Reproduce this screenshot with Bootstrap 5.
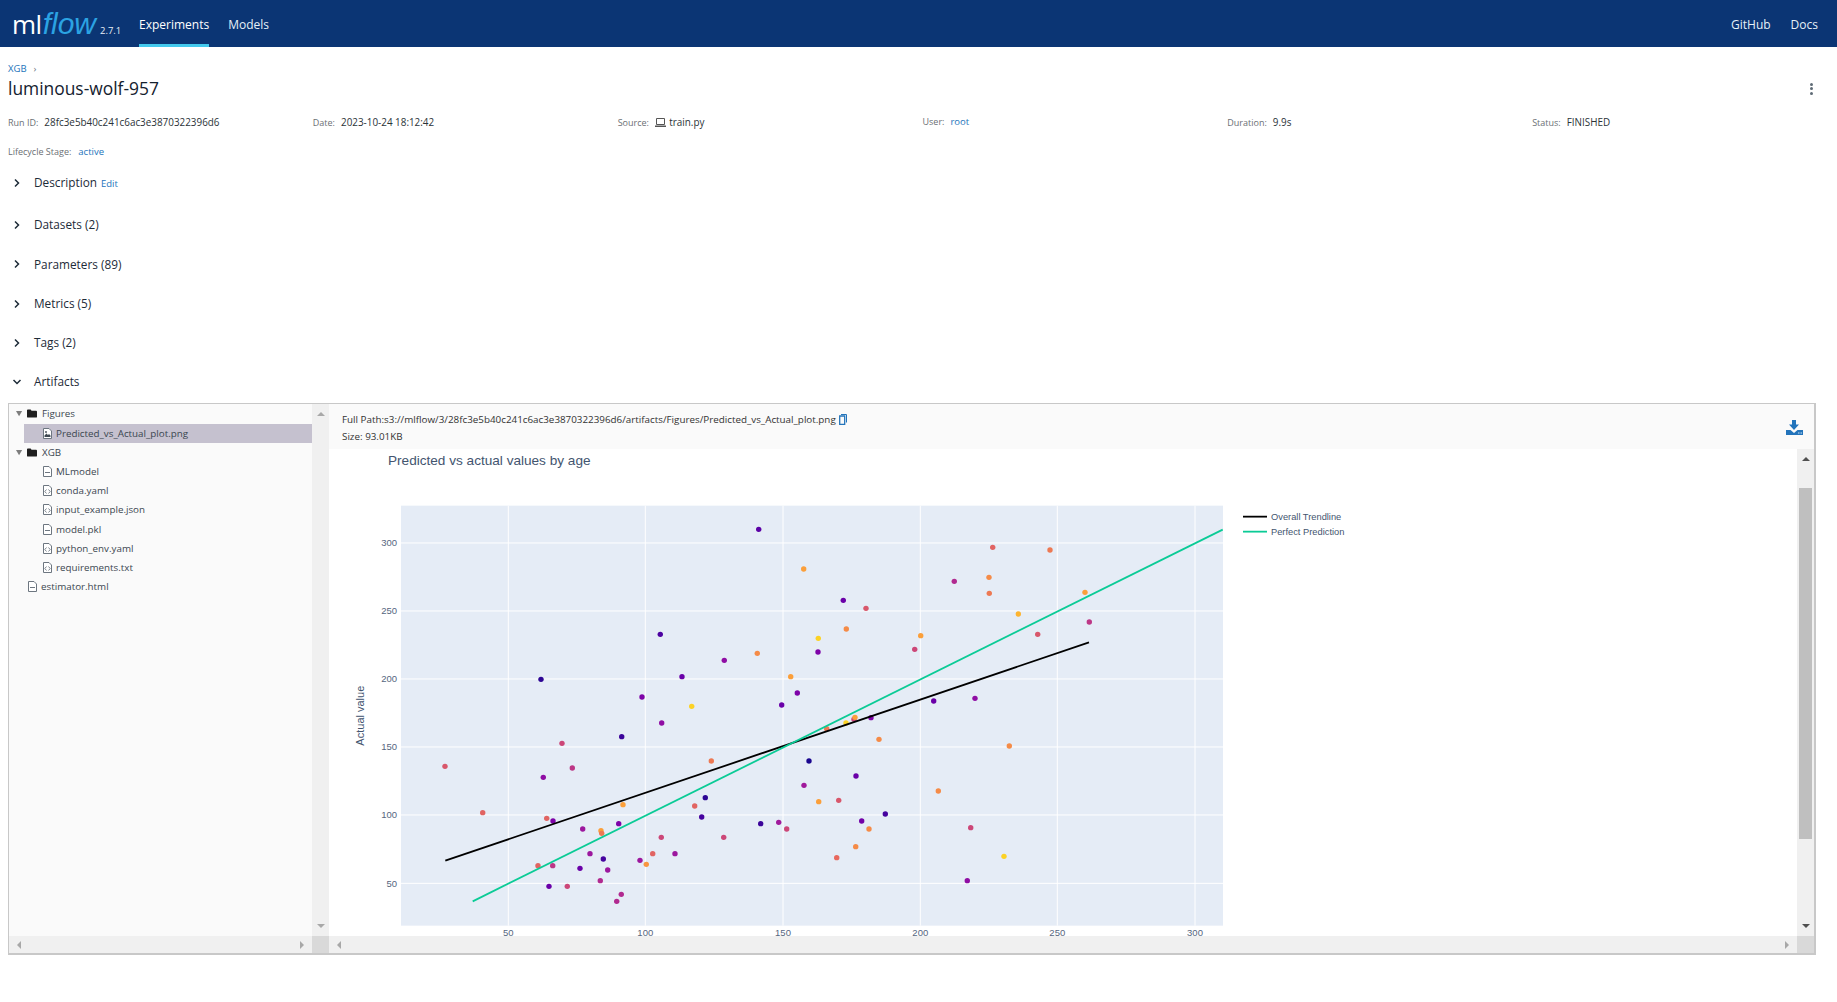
<!DOCTYPE html>
<html lang="en">
<head>
  <meta charset="UTF-8">
  <title>luminous-wolf-957 - MLflow Run</title>
  <link href="https://cdn.jsdelivr.net/npm/bootstrap@5.3.3/dist/css/bootstrap.min.css" rel="stylesheet">
  <style>
    html, body { height: 100%; }
    body {
      background: #fff;
      font-family: "Open Sans", "Liberation Sans", sans-serif;
      font-size: 10px;
      color: #1d2b38;
      overflow: hidden;
    }
    a { text-decoration: none; color: #2374bb; }

    .top-bar { background: #0b3574; height: 47px; padding: 0; }
    .brand-logo { margin-left: 12px; width: 127px; height: 47px; line-height: 47px; white-space: nowrap; }
    .logo-ml { color: #fff; font-size: 26px; font-weight: 500; letter-spacing: -0.5px; }
    .logo-flow { color: #2ba3e3; font-size: 30px; font-style: italic; font-family: "Liberation Sans", sans-serif; margin-left: 1px; }
    .logo-ver { color: #e8eef6; font-size: 9.500px; margin-left: 4px; }
    .top-link { color: #e6f1f8; font-size: 12px; height: 47px; line-height: 50px; display: block; }
    .top-link.is-active { color: #fff; border-bottom: 3px solid #43c9ed; }
    .top-links { gap: 19px; }
    .top-right { gap: 20px; margin-right: 19px; }

    .run-page { padding: 15px 0 0 8px; }
    .crumb { height: 14px; line-height: 14px; font-size: 9.500px; }
    .crumb span { color: #6b7680; margin-left: 7px; }
    .run-name { height: 25px; line-height: 25px; font-size: 17.400px; font-weight: 400; margin: 0; color: #14212e; }
    .run-menu { width: 3px; margin-right: 24px; gap: 1.500px; }
    .run-menu i { display: block; width: 3px; height: 3px; border-radius: 50%; background: #5f6b76; }
    .meta-row { height: 14px; line-height: 14px; margin-top: 14px; font-size: 9px; }
    .meta-row.second { margin-top: 16px; }
    .meta-key { color: #6b6f74; margin-right: 6px; }
    .meta-row.second .meta-key { margin-right: 7px; }
    .meta-val { color: #2b3338; font-size: 9.900px; }
    .meta-row a { font-size: 9.500px; }
    .src-icon { vertical-align: -1px; margin-right: 1px; }

    .sect-head { height: 39.400px; font-size: 11.800px; color: #1d2b38; padding-left: 5px; gap: 13px; }
    .sect-head.first { margin-top: 4px; margin-bottom: 3px; }
    .sect-head.last { height: 37.400px; }
    .sect-head.last svg { margin-left: -1px; margin-right: -1px; }
    .sect-head a { font-size: 9.500px; margin-left: -9px; padding-top: 2px; }

    .art-box { width: 1808px; height: 552px; margin-top: 3px; border: 1px solid #c8c8c8; border-right-width: 2px; border-bottom-width: 2px; }
    .tree-pane { width: 320px; }
    .tree-list { background: #fafafa; font-size: 9.800px; color: #3a4650; }
    .tree-row { height: 19.200px; line-height: 19px; white-space: nowrap; padding-left: 7px; }
    .tree-row svg { flex: none; }
    .tree-row.lvl1 { padding-left: 34px; }
    .tree-row.lvl0 { padding-left: 19px; }
    .tree-row.picked { background: #c5c1cf; margin-left: 15px; padding-left: 19px; }
    .tree-row .lbl { margin-left: 4px; }
    .tree-row .lbl.dir { margin-left: 5px; }

    .bar-v { width: 17px; background: #f0f0f0; }
    .bar-h { height: 17px; background: #f0f0f0; }
    .bar-corner { width: 17px; height: 17px; background: #d9d9d9; }
    .bar-thumb { width: 13px; height: 351px; background: #bfbfbf; margin: 0 2px; position: absolute; top: 39px; left: 0; }
    .arrow-u, .arrow-d { width: 0; height: 0; border-left: 4px solid transparent; border-right: 4px solid transparent; }
    .arrow-l, .arrow-r { width: 0; height: 0; border-top: 4px solid transparent; border-bottom: 4px solid transparent; }
    .arrow-u { border-bottom: 4px solid #a8a8a8; }
    .arrow-d { border-top: 4px solid #a8a8a8; }
    .arrow-l { border-right: 4px solid #a8a8a8; }
    .arrow-r { border-left: 4px solid #a8a8a8; }
    .arrow-u.dark { border-bottom-color: #505050; }
    .arrow-d.dark { border-top-color: #505050; }

    .view-pane { min-width: 0; }
    .view-head { height: 45px; background: #fafafa; padding: 7px 11px 0 13px; font-size: 9.830px; line-height: 17px; color: #333; }
    .dl-icon { margin-top: 9px; }
    .copy-icon { margin-left: 3px; vertical-align: -2px; }
    .plot-row { min-height: 0; }
    .plot-wrap { min-height: 0; background: #fff; }
    #plotCanvas { display: block; width: 100%; height: 100%; overflow: visible; }
  </style>
</head>
<body>

<nav class="navbar top-bar d-flex flex-nowrap align-items-start justify-content-between">
  <div class="d-flex">
    <a class="brand-logo" href="#"><span class="logo-ml">ml</span><span class="logo-flow">flow</span><span class="logo-ver">2.7.1</span></a>
    <div class="d-flex top-links">
      <a class="top-link is-active" href="#">Experiments</a>
      <a class="top-link" href="#">Models</a>
    </div>
  </div>
  <div class="d-flex top-right">
    <a class="top-link" href="#">GitHub</a>
    <a class="top-link" href="#">Docs</a>
  </div>
</nav>

<svg width="0" height="0" class="position-absolute">
  <symbol id="i-right" viewBox="0 0 8 10"><path d="M2 1.500l3.500 3.500-3.500 3.500" fill="none" stroke="#1d2b38" stroke-width="1.500"/></symbol>
  <symbol id="i-down" viewBox="0 0 10 8"><path d="M1.500 2l3.500 3.500 3.500-3.500" fill="none" stroke="#1d2b38" stroke-width="1.500"/></symbol>
  <symbol id="i-tri" viewBox="0 0 8 8"><path d="M0 1h7L3.500 7z" fill="#7d7d7d"/></symbol>
  <symbol id="i-folder" viewBox="0 0 11 9"><path d="M0 1q0-1 1-1h3l1 1.500h5q1 0 1 1V8q0 1-1 1H1Q0 9 0 8z" fill="#1f1f1f"/></symbol>
  <symbol id="i-file" viewBox="0 0 9 11"><path d="M.5.500h5.500l2.500 2.500v7.500h-8z" fill="#fff" stroke="#6d7680"/><path d="M2 6h5v1H2z" fill="#6d7680"/></symbol>
  <symbol id="i-code" viewBox="0 0 9 11"><path d="M.5.500h5.500l2.500 2.500v7.500h-8z" fill="#fff" stroke="#6d7680"/><path d="M3.500 4.500L1.800 6.500l1.700 2M5.500 4.500l1.700 2-1.700 2" fill="none" stroke="#6d7680" stroke-width=".9"/></symbol>
  <symbol id="i-image" viewBox="0 0 9 11"><path d="M.5.500h5.500l2.500 2.500v7.500h-8z" fill="#fff" stroke="#6d7680"/><path d="M1.500 9V7.500L3.500 5.500 5 7l1-1 1.500 1.500V9z" fill="#3f4852"/><circle cx="3" cy="4" r=".9" fill="#3f4852"/></symbol>
</svg>

<main class="run-page">
  <div class="crumb"><a href="#">XGB</a><span>›</span></div>
  <div class="d-flex justify-content-between align-items-center">
    <h1 class="run-name">luminous-wolf-957</h1>
    <div class="run-menu d-flex flex-column"><i></i><i></i><i></i></div>
  </div>

  <div class="row g-0 meta-row">
    <div class="col-2"><span class="meta-key">Run ID:</span><span class="meta-val">28fc3e5b40c241c6ac3e3870322396d6</span></div>
    <div class="col-2"><span class="meta-key">Date:</span><span class="meta-val">2023-10-24 18:12:42</span></div>
    <div class="col-2"><span class="meta-key">Source:</span><svg class="src-icon" width="11" height="9" viewBox="0 0 11 9"><path d="M1.500.500h8v6h-8z" fill="none" stroke="#555"/><path d="M0 7.500h11V9H0z" fill="#555"/></svg> <span class="meta-val">train.py</span></div>
    <div class="col-2"><span class="meta-key">User:</span><a href="#">root</a></div>
    <div class="col-2"><span class="meta-key">Duration:</span><span class="meta-val">9.9s</span></div>
    <div class="col-2"><span class="meta-key">Status:</span><span class="meta-val">FINISHED</span></div>
  </div>
  <div class="meta-row second"><span class="meta-key">Lifecycle Stage:</span><a href="#">active</a></div>

  <div class="sect-head first d-flex align-items-center"><svg width="8" height="10"><use href="#i-right"/></svg><span>Description</span><a href="#">Edit</a></div>
  <div class="sect-head d-flex align-items-center"><svg width="8" height="10"><use href="#i-right"/></svg><span>Datasets (2)</span></div>
  <div class="sect-head d-flex align-items-center"><svg width="8" height="10"><use href="#i-right"/></svg><span>Parameters (89)</span></div>
  <div class="sect-head d-flex align-items-center"><svg width="8" height="10"><use href="#i-right"/></svg><span>Metrics (5)</span></div>
  <div class="sect-head d-flex align-items-center"><svg width="8" height="10"><use href="#i-right"/></svg><span>Tags (2)</span></div>
  <div class="sect-head last d-flex align-items-center"><svg width="10" height="8"><use href="#i-down"/></svg><span>Artifacts</span></div>

  <div class="art-box d-flex">
    <div class="tree-pane d-flex flex-column flex-shrink-0">
      <div class="d-flex flex-grow-1">
        <div class="tree-list flex-grow-1">
          <div class="tree-row d-flex align-items-center"><svg width="7" height="7" class="me-1"><use href="#i-tri"/></svg><svg width="10" height="9"><use href="#i-folder"/></svg><span class="lbl dir">Figures</span></div>
          <div class="tree-row picked d-flex align-items-center"><svg width="9" height="11"><use href="#i-image"/></svg><span class="lbl">Predicted_vs_Actual_plot.png</span></div>
          <div class="tree-row d-flex align-items-center"><svg width="7" height="7" class="me-1"><use href="#i-tri"/></svg><svg width="10" height="9"><use href="#i-folder"/></svg><span class="lbl dir">XGB</span></div>
          <div class="tree-row lvl1 d-flex align-items-center"><svg width="9" height="11"><use href="#i-file"/></svg><span class="lbl">MLmodel</span></div>
          <div class="tree-row lvl1 d-flex align-items-center"><svg width="9" height="11"><use href="#i-code"/></svg><span class="lbl">conda.yaml</span></div>
          <div class="tree-row lvl1 d-flex align-items-center"><svg width="9" height="11"><use href="#i-code"/></svg><span class="lbl">input_example.json</span></div>
          <div class="tree-row lvl1 d-flex align-items-center"><svg width="9" height="11"><use href="#i-file"/></svg><span class="lbl">model.pkl</span></div>
          <div class="tree-row lvl1 d-flex align-items-center"><svg width="9" height="11"><use href="#i-code"/></svg><span class="lbl">python_env.yaml</span></div>
          <div class="tree-row lvl1 d-flex align-items-center"><svg width="9" height="11"><use href="#i-code"/></svg><span class="lbl">requirements.txt</span></div>
          <div class="tree-row lvl0 d-flex align-items-center"><svg width="9" height="11"><use href="#i-file"/></svg><span class="lbl">estimator.html</span></div>
        </div>
        <div class="bar-v d-flex flex-column justify-content-between align-items-center py-2">
          <div class="arrow-u"></div>
          <div class="arrow-d"></div>
        </div>
      </div>
      <div class="d-flex">
        <div class="bar-h flex-grow-1 d-flex justify-content-between align-items-center px-2"><div class="arrow-l"></div><div class="arrow-r"></div></div>
        <div class="bar-corner"></div>
      </div>
    </div>

    <div class="view-pane flex-grow-1 d-flex flex-column">
      <div class="view-head d-flex justify-content-between">
        <div>
          <div>Full Path:s3://mlflow/3/28fc3e5b40c241c6ac3e3870322396d6/artifacts/Figures/Predicted_vs_Actual_plot.png<svg class="copy-icon" width="8" height="11" viewBox="0 0 8 11"><path d="M2 .500h5.500v8" fill="none" stroke="#2374bb"/><path d="M.700 2h5v8.500h-5z" fill="none" stroke="#2374bb" stroke-width="1.300"/></svg></div>
          <div>Size: 93.01KB</div>
        </div>
        <svg class="dl-icon" width="17" height="15" viewBox="0 0 17 15"><path d="M6 0h4v4.500h3L8 10 3 4.500h3z" fill="#2374bb"/><path d="M0 10h4.500L8 13l3.500-3H17v5H0z" fill="#2374bb"/><path d="M12 12.500h1.500v1H12zM14.500 12.500H16v1h-1.500z" fill="#cfe2f3"/></svg>
      </div>
      <div class="plot-row d-flex flex-grow-1">
        <div class="plot-wrap flex-grow-1"><svg id="plotCanvas" xmlns="http://www.w3.org/2000/svg"></svg></div>
        <div class="bar-v d-flex flex-column justify-content-between align-items-center py-2 position-relative">
          <div class="arrow-u dark"></div>
          <div class="bar-thumb"></div>
          <div class="arrow-d dark"></div>
        </div>
      </div>
      <div class="d-flex">
        <div class="bar-h flex-grow-1 d-flex justify-content-between align-items-center px-2"><div class="arrow-l"></div><div class="arrow-r"></div></div>
        <div class="bar-corner"></div>
      </div>
    </div>
  </div>
</main>

<script src="https://cdn.jsdelivr.net/npm/bootstrap@5.3.3/dist/js/bootstrap.bundle.min.js"></script>
<script>
  const canvas = document.getElementById("plotCanvas");
  const NS = "http://www.w3.org/2000/svg";
  // coordinates below are page pixels, shifted by where the canvas landed
  const rect = canvas.getBoundingClientRect();
  const ox = rect.left, oy = rect.top;

  function add(tag, attrs, txt) {
    const el = document.createElementNS(NS, tag);
    for (const k in attrs) el.setAttribute(k, attrs[k]);
    if (txt !== undefined) el.textContent = txt;
    canvas.appendChild(el);
    return el;
  }

  const box = { l: 401, t: 506, r: 1223, b: 926 };
  const xTicks = [[50, 508.3], [100, 645.3], [150, 783], [200, 920.3], [250, 1057.3], [300, 1195]];
  const yTicks = [[300, 543.3], [250, 611.3], [200, 679.3], [150, 747.3], [100, 815.3], [50, 883.7]];
  const labelStyle = { fill: "#56667e", "font-family": "Liberation Sans, sans-serif", "font-size": "9.500" };

  add("rect", { x: box.l - ox, y: box.t - oy, width: box.r - box.l, height: box.b - box.t, fill: "#e5ecf6" });
  xTicks.forEach(t => {
    add("line", { x1: t[1] - ox, x2: t[1] - ox, y1: box.t - oy, y2: box.b - oy, stroke: "#fff", "stroke-width": 1 });
    add("text", { ...labelStyle, x: t[1] - ox, y: 936 - oy, "text-anchor": "middle" }, t[0]);
  });
  yTicks.forEach(t => {
    add("line", { x1: box.l - ox, x2: box.r - ox, y1: t[1] - oy, y2: t[1] - oy, stroke: "#fff", "stroke-width": 1 });
    add("text", { ...labelStyle, x: 397 - ox, y: t[1] - oy + 3.5, "text-anchor": "end" }, t[0]);
  });

  // points read off the picture: [x, y, colour]
  const pts = [
    [758.7,529.7,"#5c01a6"],[541,679.7,"#2d0594"],[660.3,634.7,"#4c02a1"],[682,677,"#6a00a8"],[724.3,660.7,"#8f0da4"],
    [642,697.3,"#7e03a8"],[757.3,653.7,"#f58b47"],[790.7,677,"#fb9f3a"],[691.7,706.7,"#fcd225"],[781.7,705.3,"#6a00a8"],[797.3,693.3,"#7e03a8"],
    [661.7,723.3,"#8f0da4"],[621.7,737,"#3b049a"],[562,743.7,"#cc4778"],[445,766.7,"#d8576b"],[572.3,768.3,"#bd3786"],[543.3,777.7,"#8f0da4"],
    [482.7,813,"#e16462"],[546.7,818.7,"#e16462"],[553,821.3,"#7e03a8"],[623,805,"#fb9f3a"],[711.3,761.3,"#ed7953"],[705.3,798,"#2c0594"],
    [694.7,806.3,"#e16462"],[701.7,817.3,"#46039f"],[760.7,824,"#3b049a"],[778.7,822.7,"#a01a9c"],[786.7,829.3,"#cc4778"],[582.7,829.3,"#9c179e"],
    [618.7,824,"#7e03a8"],[601,831,"#fb9f3a"],[601.7,833.7,"#ed7953"],[661.3,837.7,"#cc4778"],[723.7,837.7,"#cc4778"],[590,854,"#9c179e"],
    [652.7,854,"#e16462"],[675,854,"#9c179e"],[603.3,859.3,"#46039f"],[640,860.7,"#9c179e"],[646.3,864.7,"#f89540"],[538,866,"#e16462"],
    [552.7,866,"#bd3786"],[580,868.7,"#6a00a8"],[607.7,870.3,"#9c179e"],[600.3,881,"#b12a90"],[549,886.7,"#6a00a8"],[567.3,886.7,"#cc4778"],
    [621.3,894.7,"#b12a90"],[616.7,901.7,"#b12a90"],
    [803.7,569.3,"#fb9f3a"],[843.3,600.7,"#6a00a8"],[866,608.7,"#d8576b"],[846.3,629.3,"#f58b47"],[818.3,638.7,"#fcd225"],[818,652.3,"#7e03a8"],
    [920.7,636,"#fb9f3a"],[914.7,649.7,"#cc4778"],[954.3,581.7,"#b12a90"],[992.7,547.7,"#e16462"],[1050,550.3,"#ed7953"],[989,577.7,"#f58b47"],
    [989.3,593.7,"#ed7953"],[1018.3,614.3,"#fdb42f"],[1085,592.7,"#fb9f3a"],[1089.3,622.3,"#bd3786"],[1037.7,634.7,"#d8576b"],[933.7,701.3,"#6a00a8"],[975,698.7,"#8f0da4"],
    [826.7,729,"#ed7953"],[846,723.3,"#fcd225"],[854,719.5,"#cc4778"],[855,717.7,"#fb9f3a"],[871,718,"#7e03a8"],[879,739.7,"#f58b47"],[1009.3,746.3,"#f58b47"],
    [809,761.3,"#1a068f"],[856,776.3,"#6a00a8"],[804,785.7,"#a01a9c"],[938.3,791.3,"#f58b47"],[818.7,802,"#fb9f3a"],[838.7,800.7,"#d8576b"],
    [885.3,814.3,"#46039f"],[861.7,821.3,"#7201a8"],[869,829.3,"#f58b47"],[970.7,828,"#cc4778"],[855.7,847,"#f58b47"],[836.7,858,"#e8685e"],
    [1004,856.7,"#fcd225"],[967.3,881,"#8f0da4"]
  ];
  pts.forEach(p => add("circle", { cx: p[0] - ox, cy: p[1] - oy, r: 2.7, fill: p[2] }));

  add("line", { x1: 445.3 - ox, y1: 861 - oy, x2: 1089 - ox, y2: 642.7 - oy, stroke: "#000", "stroke-width": 1.8 });
  add("line", { x1: 472.7 - ox, y1: 901.7 - oy, x2: 1222.7 - ox, y2: 530 - oy, stroke: "#0bcb96", "stroke-width": 1.8 });

  add("text", { fill: "#43556f", "font-family": "Liberation Sans, sans-serif", "font-size": 13.6, x: 388 - ox, y: 465 - oy }, "Predicted vs actual values by age");
  add("text", { fill: "#43556f", "font-family": "Liberation Sans, sans-serif", "font-size": 11, "text-anchor": "middle",
                transform: "translate(" + (364 - ox) + "," + (716 - oy) + ") rotate(-90)" }, "Actual value");

  add("line", { x1: 1243 - ox, x2: 1267 - ox, y1: 517 - oy, y2: 517 - oy, stroke: "#000", "stroke-width": 1.8 });
  add("line", { x1: 1243 - ox, x2: 1267 - ox, y1: 532 - oy, y2: 532 - oy, stroke: "#0bcb96", "stroke-width": 1.8 });
  add("text", { ...labelStyle, fill: "#43556f", "font-size": 9.3, x: 1271 - ox, y: 520.5 - oy }, "Overall Trendline");
  add("text", { ...labelStyle, fill: "#43556f", "font-size": 9.3, x: 1271 - ox, y: 535 - oy }, "Perfect Prediction");
</script>
</body>
</html>
